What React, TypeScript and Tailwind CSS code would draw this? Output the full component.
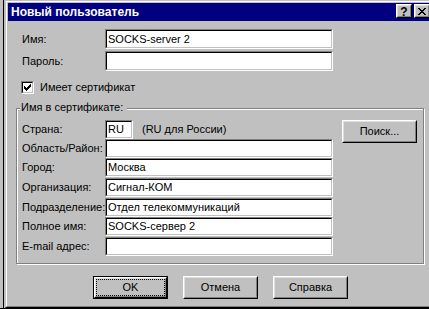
import React from "react";

function Field({ value, w, h }: { value?: string; w: string; h: string }) {
  return (
    <div className={`${w} ${h} shrink-0 border border-t-[#808080] border-l-[#808080] border-b-white border-r-white`}>
      <div className="h-full border border-t-black border-l-black border-b-[#c0c0c0] border-r-[#c0c0c0] bg-white pl-[1px] flex items-center leading-none whitespace-nowrap overflow-hidden">
        {value}
      </div>
    </div>
  );
}

function Btn({ children, def }: { children: React.ReactNode; def?: boolean }) {
  if (def) {
    return (
      <div className="w-[75px] h-[23px] shrink-0 border border-black">
        <div className="h-full border border-t-white border-l-white border-b-black border-r-black">
          <div className="h-full border border-t-[#dfdfdf] border-l-[#dfdfdf] border-b-[#808080] border-r-[#808080] bg-[#c0c0c0]">
            <div className="h-full border border-dotted border-black flex items-center justify-center leading-none">
              {children}
            </div>
          </div>
        </div>
      </div>
    );
  }
  return (
    <div className="w-[75px] h-[23px] shrink-0 border border-t-white border-l-white border-b-black border-r-black">
      <div className="h-full border border-t-[#dfdfdf] border-l-[#dfdfdf] border-b-[#808080] border-r-[#808080] bg-[#c0c0c0] flex items-center justify-center leading-none">
        {children}
      </div>
    </div>
  );
}

function CapBtn({ children }: { children: React.ReactNode }) {
  return (
    <div className="w-[16px] h-[14px] shrink-0 border border-t-white border-l-white border-b-black border-r-black">
      <div className="h-full border border-t-[#dfdfdf] border-l-[#dfdfdf] border-b-[#808080] border-r-[#808080] bg-[#c0c0c0] flex items-center justify-center leading-none">
        {children}
      </div>
    </div>
  );
}

function Row({ label, children, mt }: { label: string; children: React.ReactNode; mt: string }) {
  return (
    <div className={`${mt} h-[19px] flex items-center`}>
      <div className="w-[83px] shrink-0 whitespace-nowrap leading-none">{label}</div>
      {children}
    </div>
  );
}

export default function App() {
  return (
    <div className="w-[429px] h-[309px] overflow-hidden bg-black flex font-['Liberation_Sans',Arial,sans-serif] text-[11px] text-black">
      <div className="w-[5px] h-[308px] shrink-0 flex bg-[#c0c0c0]">
        <div className="w-[3px]" />
        <div className="w-[1px] bg-black" />
      </div>
      <div className="shrink-0 w-[430px] h-[308px] border border-t-[#c0c0c0] border-l-[#c0c0c0] border-b-black border-r-black bg-[#c0c0c0]">
        <div className="h-full border border-t-white border-l-white border-b-[#808080] border-r-[#808080] p-[1px] flex flex-col">
          {/* Title bar */}
          <div className="h-[18px] shrink-0 bg-[#000080] flex items-start pl-[3px] pr-[2px]">
            <div className="h-[18px] flex items-center text-white font-bold text-[12px] leading-none whitespace-nowrap">
              Новый пользователь
            </div>
            <div className="ml-auto mt-[1px] flex gap-[2px]">
              <CapBtn>
                <span className="font-bold text-[12px] leading-none mt-[1px]">?</span>
              </CapBtn>
              <CapBtn>
                <svg width="8" height="7" viewBox="0 0 8 7" shapeRendering="crispEdges">
                  <rect x="0" y="0" width="2" height="1" fill="#000" />
                  <rect x="6" y="0" width="2" height="1" fill="#000" />
                  <rect x="1" y="1" width="2" height="1" fill="#000" />
                  <rect x="5" y="1" width="2" height="1" fill="#000" />
                  <rect x="2" y="2" width="4" height="1" fill="#000" />
                  <rect x="3" y="3" width="2" height="1" fill="#000" />
                  <rect x="2" y="4" width="4" height="1" fill="#000" />
                  <rect x="1" y="5" width="2" height="1" fill="#000" />
                  <rect x="5" y="5" width="2" height="1" fill="#000" />
                  <rect x="0" y="6" width="2" height="1" fill="#000" />
                  <rect x="6" y="6" width="2" height="1" fill="#000" />
                </svg>
              </CapBtn>
            </div>
          </div>

          {/* Body */}
          <div className="flex-1 flex flex-col">
            <div className="mt-[8px] ml-[14px] h-[20px] flex items-center">
              <div className="w-[83px] shrink-0 leading-none">Имя:</div>
              <Field value="SOCKS-server 2" w="w-[228px]" h="h-[20px]" />
            </div>
            <div className="mt-[2px] ml-[14px] h-[20px] flex items-center">
              <div className="w-[83px] shrink-0 leading-none">Пароль:</div>
              <Field w="w-[228px]" h="h-[20px]" />
            </div>

            <div className="mt-[10px] ml-[13px] h-[13px] flex items-center">
              <div className="w-[13px] h-[13px] shrink-0 border border-t-[#808080] border-l-[#808080] border-b-white border-r-white">
                <div className="h-full border border-t-black border-l-black border-b-[#c0c0c0] border-r-[#c0c0c0] bg-white flex items-center justify-center">
                  <svg width="7" height="7" viewBox="0 0 7 7" shapeRendering="crispEdges">
                    <rect x="6" y="0" width="1" height="1" fill="#000" />
                    <rect x="5" y="1" width="2" height="1" fill="#000" />
                    <rect x="0" y="2" width="1" height="1" fill="#000" />
                    <rect x="4" y="2" width="3" height="1" fill="#000" />
                    <rect x="0" y="3" width="2" height="1" fill="#000" />
                    <rect x="3" y="3" width="3" height="1" fill="#000" />
                    <rect x="0" y="4" width="5" height="1" fill="#000" />
                    <rect x="1" y="5" width="3" height="1" fill="#000" />
                    <rect x="2" y="6" width="1" height="1" fill="#000" />
                  </svg>
                </div>
              </div>
              <div className="ml-[6px] leading-none whitespace-nowrap">Имеет сертификат</div>
            </div>

            {/* Group box */}
            <div className="mt-[14px] ml-[8px] w-[408px] relative border border-[#808080] shadow-[inset_1px_1px_0_#fff,1px_1px_0_#fff] pt-[11px] pb-[7px] flex">
              <div className="absolute top-[-8px] left-[3px] pl-[1px] pr-[4px] bg-[#c0c0c0] leading-[13px] whitespace-nowrap">
                Имя в сертификате:
              </div>
              <div className="pl-[5px] flex flex-col">
                <Row label="Страна:" mt="mt-0">
                  <Field value="RU" w="w-[28px]" h="h-[19px]" />
                  <div className="ml-[9px] leading-none whitespace-nowrap">(RU для России)</div>
                </Row>
                <Row label="Область/Район:" mt="mt-0">
                  <Field w="w-[228px]" h="h-[19px]" />
                </Row>
                <Row label="Город:" mt="mt-0">
                  <Field value="Москва" w="w-[228px]" h="h-[19px]" />
                </Row>
                <Row label="Организация:" mt="mt-[1px]">
                  <Field value="Сигнал-КОМ" w="w-[228px]" h="h-[19px]" />
                </Row>
                <Row label="Подразделение:" mt="mt-[1px]">
                  <Field value="Отдел телекоммуникаций" w="w-[228px]" h="h-[19px]" />
                </Row>
                <Row label="Полное имя:" mt="mt-0">
                  <Field value="SOCKS-сервер 2" w="w-[228px]" h="h-[19px]" />
                </Row>
                <Row label="E-mail адрес:" mt="mt-[1px]">
                  <Field w="w-[228px]" h="h-[19px]" />
                </Row>
              </div>
              <div className="ml-auto pr-[6px]">
                <Btn>Поиск...</Btn>
              </div>
            </div>

            <div className="mt-[12px] ml-[85px] flex gap-[15px]">
              <Btn def>OK</Btn>
              <Btn>Отмена</Btn>
              <Btn>Справка</Btn>
            </div>
          </div>
        </div>
      </div>
    </div>
  );
}
